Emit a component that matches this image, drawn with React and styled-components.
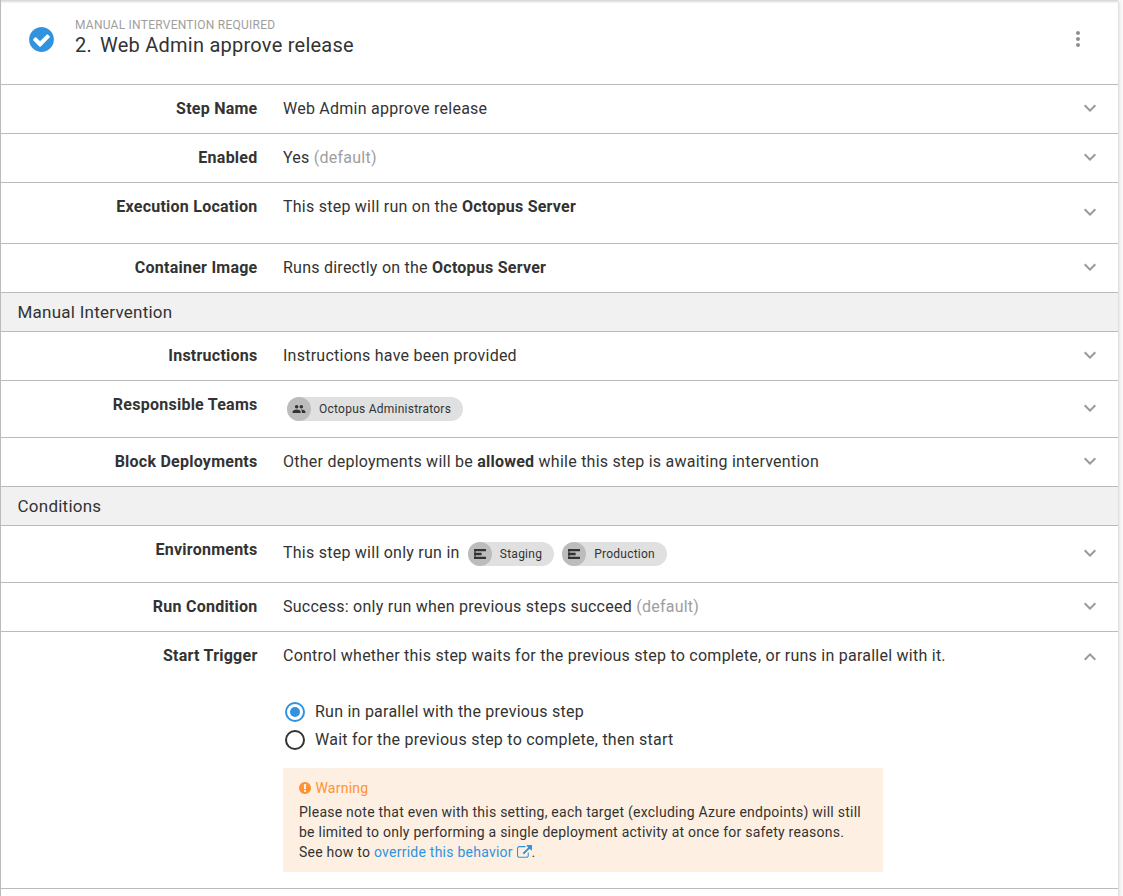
import React from "react";
import styled, { createGlobalStyle } from "styled-components";

const GlobalStyle = createGlobalStyle`
  * { box-sizing: border-box; }
  body {
    margin: 0;
    background: #fafafa;
    color: #333;
    font-family: Roboto, "Liberation Sans", sans-serif;
    font-size: 16px;
    letter-spacing: 0.245px;
    overflow: hidden;
  }
`;

const Page = styled.div`
  height: 896px;
  overflow: hidden;
`;

const Panel = styled.main`
  width: 1118px;
  height: 930px;
  background: #fff;
  border-left: 1px solid #bbb;
  box-shadow: 0 1px 4px rgba(0, 0, 0, 0.25);
`;

const Header = styled.header`
  display: flex;
  align-items: flex-start;
  height: 85px;
  padding: 0 28px 0 27px;
  border-bottom: 1px solid #bbb;
  box-shadow: inset 0 3px 2px -1px rgba(0, 0, 0, 0.15);
`;

const StatusIcon = styled.svg`
  width: 29px;
  height: 29px;
  margin: 25px 0.6px 0 -0.6px;
  fill: #2f93e0;
`;

const Titles = styled.div`
  flex: 1;
  margin: 17px 0 0 18px;
`;

const Overline = styled.div`
  font-size: 12px;
  line-height: 16px;
  color: #9e9e9e;
  text-transform: uppercase;
`;

const Title = styled.h1`
  margin: 0;
  font-size: 20px;
  font-weight: 400;
  line-height: 24px;
`;

const TitleNumber = styled.span`
  margin-right: 8px;
`;

const MenuIcon = styled.svg`
  width: 24px;
  height: 24px;
  margin-top: 27px;
  fill: #8f8f8f;
`;

const Section = styled.h2`
  margin: 0;
  height: 39px;
  padding-left: 16.5px;
  border-bottom: 1px solid #bbb;
  background: #f1f1f1;
  font-size: 17px;
  font-weight: 400;
  line-height: 38px;
`;

const RowBox = styled.section`
  display: flex;
  align-items: ${(p) => (p.$open ? "flex-start" : "center")};
  height: ${(p) => p.$height}px;
  padding-right: 16px;
  border-bottom: 1px solid #bbb;
`;

const Label = styled.div`
  align-self: flex-start;
  width: 256.5px;
  padding-top: 12px;
  font-weight: 700;
  line-height: 24px;
  text-align: right;
`;

const Content = styled.div`
  align-self: flex-start;
  flex: 1;
  margin-left: 25.5px;
  padding-top: ${(p) => p.$top}px;
  line-height: 24px;
`;

const Chevron = styled.svg`
  width: 24px;
  height: 24px;
  margin: ${(p) => (p.$open ? "13px 0 0" : "0 0 2px")};
  fill: #999;
`;

const Muted = styled.span`
  color: #9e9e9e;
`;

const Chips = styled.div`
  display: flex;
  align-items: flex-start;
`;

const ChipBox = styled.span`
  display: inline-flex;
  align-items: center;
  height: 24px;
  margin: ${(p) => p.$top || 0}px 4px 0;
  padding-right: 12px;
  border-radius: 12px;
  background: #e0e0e0;
  font-size: 12px;
`;

const Avatar = styled.span`
  display: flex;
  align-items: center;
  justify-content: center;
  width: 24px;
  height: 24px;
  margin-right: 8px;
  border-radius: 50%;
  background: #bcbcbc;

  svg { fill: #333; }
`;

const Radios = styled.div`
  display: flex;
  flex-direction: column;
  gap: 4px;
  margin-top: 32px;
`;

const RadioLabel = styled.label`
  display: flex;
  align-items: center;
  height: 24px;
`;

const RadioRing = styled.span`
  display: flex;
  align-items: center;
  justify-content: center;
  width: 20px;
  height: 20px;
  margin: 0 10px 0 2px;
  border: 2px solid ${(p) => (p.$checked ? "#2f93e0" : "#333")};
  border-radius: 50%;

  &::after {
    content: "";
    width: 10px;
    height: 10px;
    border-radius: 50%;
    background: ${(p) => (p.$checked ? "#2f93e0" : "transparent")};
  }
`;

const Callout = styled.aside`
  width: 600px;
  height: 104px;
  margin-top: 16px;
  padding: 10px 16px;
  background: #fdf0e2;
  font-size: 14px;
  line-height: 20px;
`;

const CalloutTitle = styled.div`
  display: flex;
  align-items: center;
  margin-bottom: 4px;
  color: #ff9233;
`;

const CalloutIcon = styled.svg`
  width: 14px;
  height: 14px;
  margin: 0 3.4px 0 -1px;
  fill: currentColor;
`;

const Line = styled.div`
  white-space: nowrap;
`;

const Link = styled.a`
  color: #2f93e0;
  text-decoration: none;

  svg {
    width: 15px;
    height: 15px;
    vertical-align: -2.5px;
    fill: currentColor;
  }
`;

function Row({ label, height = 49, top = 12, open, children }) {
  return (
    <RowBox $height={height} $open={open}>
      <Label>{label}</Label>
      <Content $top={top}>{children}</Content>
      <Chevron viewBox="0 0 24 24" $open={open}>
        <path d={open ? "M12 8l-6 6 1.41 1.41L12 10.83l4.59 4.58L18 14z" : "M16.59 8.59L12 13.17 7.41 8.59 6 10l6 6 6-6z"} />
      </Chevron>
    </RowBox>
  );
}

function TeamIcon() {
  return (
    <svg width="14" height="14" viewBox="0 0 24 24">
      <path d="M16 11c1.66 0 2.99-1.34 2.99-3S17.66 5 16 5c-1.66 0-3 1.34-3 3s1.34 3 3 3zm-8 0c1.66 0 2.99-1.34 2.99-3S9.66 5 8 5C6.34 5 5 6.34 5 8s1.34 3 3 3zm0 2c-2.33 0-7 1.17-7 3.5V19h14v-2.5c0-2.33-4.67-3.5-7-3.5zm8 0c-.29 0-.62.02-.97.05 1.16.84 1.97 1.97 1.97 3.45V19h6v-2.5c0-2.33-4.67-3.5-7-3.5z" />
    </svg>
  );
}

function EnvironmentIcon() {
  return (
    <svg width="12" height="12" viewBox="0 0 12 12">
      <path d="M0 1h12v2.3H0zM0 4.8h7.6v2.4H0zM0 8.7h12V11H0z" />
      <path d="M0 1h2v10H0z" opacity="0.6" />
    </svg>
  );
}

function Chip({ icon, top, children }) {
  return (
    <ChipBox $top={top}>
      <Avatar>{icon}</Avatar>
      {children}
    </ChipBox>
  );
}

function Radio({ checked, children }) {
  return (
    <RadioLabel>
      <RadioRing $checked={checked} />
      {children}
    </RadioLabel>
  );
}

export default function App() {
  return (
    <Page>
      <GlobalStyle />
      <Panel>
        <Header>
          <StatusIcon viewBox="0 0 1792 1792">
            <path d="M1412 734q0-28-18-46l-91-90q-19-19-45-19t-45 19l-408 407-226-226q-19-19-45-19t-45 19l-91 90q-18 18-18 46 0 27 18 45l362 362q19 19 45 19 27 0 46-19l543-543q18-18 18-45zm252 162q0 209-103 385.5t-279.5 279.5-385.5 103-385.5-103-279.5-279.5-103-385.5 103-385.5 279.5-279.5 385.5-103 385.5 103 279.5 279.5 103 385.5z" />
          </StatusIcon>
          <Titles>
            <Overline>Manual Intervention Required</Overline>
            <Title>
              <TitleNumber>2.</TitleNumber>Web Admin approve release
            </Title>
          </Titles>
          <MenuIcon viewBox="0 0 24 24">
            <path d="M12 8c1.1 0 2-.9 2-2s-.9-2-2-2-2 .9-2 2 .9 2 2 2zm0 2c-1.1 0-2 .9-2 2s.9 2 2 2 2-.9 2-2-.9-2-2-2zm0 6c-1.1 0-2 .9-2 2s.9 2 2 2 2-.9 2-2-.9-2-2-2z" />
          </MenuIcon>
        </Header>
        <Row label="Step Name">Web Admin approve release</Row>
        <Row label="Enabled">
          Yes <Muted>(default)</Muted>
        </Row>
        <Row label="Execution Location" height={61}>
          This step will run on the <b>Octopus Server</b>
        </Row>
        <Row label="Container Image">
          Runs directly on the <b>Octopus Server</b>
        </Row>
        <Section>Manual Intervention</Section>
        <Row label="Instructions">Instructions have been provided</Row>
        <Row label="Responsible Teams" height={57} top={16}>
          <Chips>
            <Chip icon={<TeamIcon />}>Octopus Administrators</Chip>
          </Chips>
        </Row>
        <Row label="Block Deployments">
          Other deployments will be <b>allowed</b> while this step is awaiting intervention
        </Row>
        <Section>Conditions</Section>
        <Row label="Environments" height={57} top={15}>
          <Chips>
            <span>This step will only run in&nbsp;</span>
            <Chip top={1} icon={<EnvironmentIcon />}>Staging</Chip>
            <Chip top={1} icon={<EnvironmentIcon />}>Production</Chip>
          </Chips>
        </Row>
        <Row label="Run Condition">
          Success: only run when previous steps succeed <Muted>(default)</Muted>
        </Row>
        <Row label="Start Trigger" height={257} open>
          Control whether this step waits for the previous step to complete, or runs in parallel with it.
          <Radios>
            <Radio checked>Run in parallel with the previous step</Radio>
            <Radio>Wait for the previous step to complete, then start</Radio>
          </Radios>
          <Callout>
            <CalloutTitle>
              <CalloutIcon viewBox="0 0 1792 1792">
                <path d="M896 128q209 0 385.5 103t279.5 279.5 103 385.5-103 385.5-279.5 279.5-385.5 103-385.5-103-279.5-279.5-103-385.5 103-385.5 279.5-279.5 385.5-103zm128 1247v-190q0-14-9-23.5t-22-9.5h-192q-13 0-23 10t-10 23v190q0 13 10 23t23 10h192q13 0 22-9.5t9-23.5zm-2-344l18-621q0-12-10-18-10-8-24-8h-220q-14 0-24 8-10 6-10 18l17 621q0 10 10 17.5t24 7.5h185q14 0 23.5-7.5t10.5-17.5z" />
              </CalloutIcon>
              Warning
            </CalloutTitle>
            <Line>Please note that even with this setting, each target (excluding Azure endpoints) will still</Line>
            <Line>be limited to only performing a single deployment activity at once for safety reasons.</Line>
            <Line>
              See how to{" "}
              <Link>
                override this behavior{" "}
                <svg viewBox="0 0 1792 1792">
                  <path d="M1408 928v320q0 119-84.5 203.5t-203.5 84.5h-832q-119 0-203.5-84.5t-84.5-203.5v-832q0-119 84.5-203.5t203.5-84.5h704q14 0 23 9t9 23v64q0 14-9 23t-23 9h-704q-66 0-113 47t-47 113v832q0 66 47 113t113 47h832q66 0 113-47t47-113v-320q0-14 9-23t23-9h64q14 0 23 9t9 23zm384-864v512q0 26-19 45t-45 19-45-19l-176-176-652 652q-10 10-23 10t-23-10l-114-114q-10-10-10-23t10-23l652-652-176-176q-19-19-19-45t19-45 45-19h512q26 0 45 19t19 45z" />
                </svg>
              </Link>
              .
            </Line>
          </Callout>
        </Row>
      </Panel>
    </Page>
  );
}
